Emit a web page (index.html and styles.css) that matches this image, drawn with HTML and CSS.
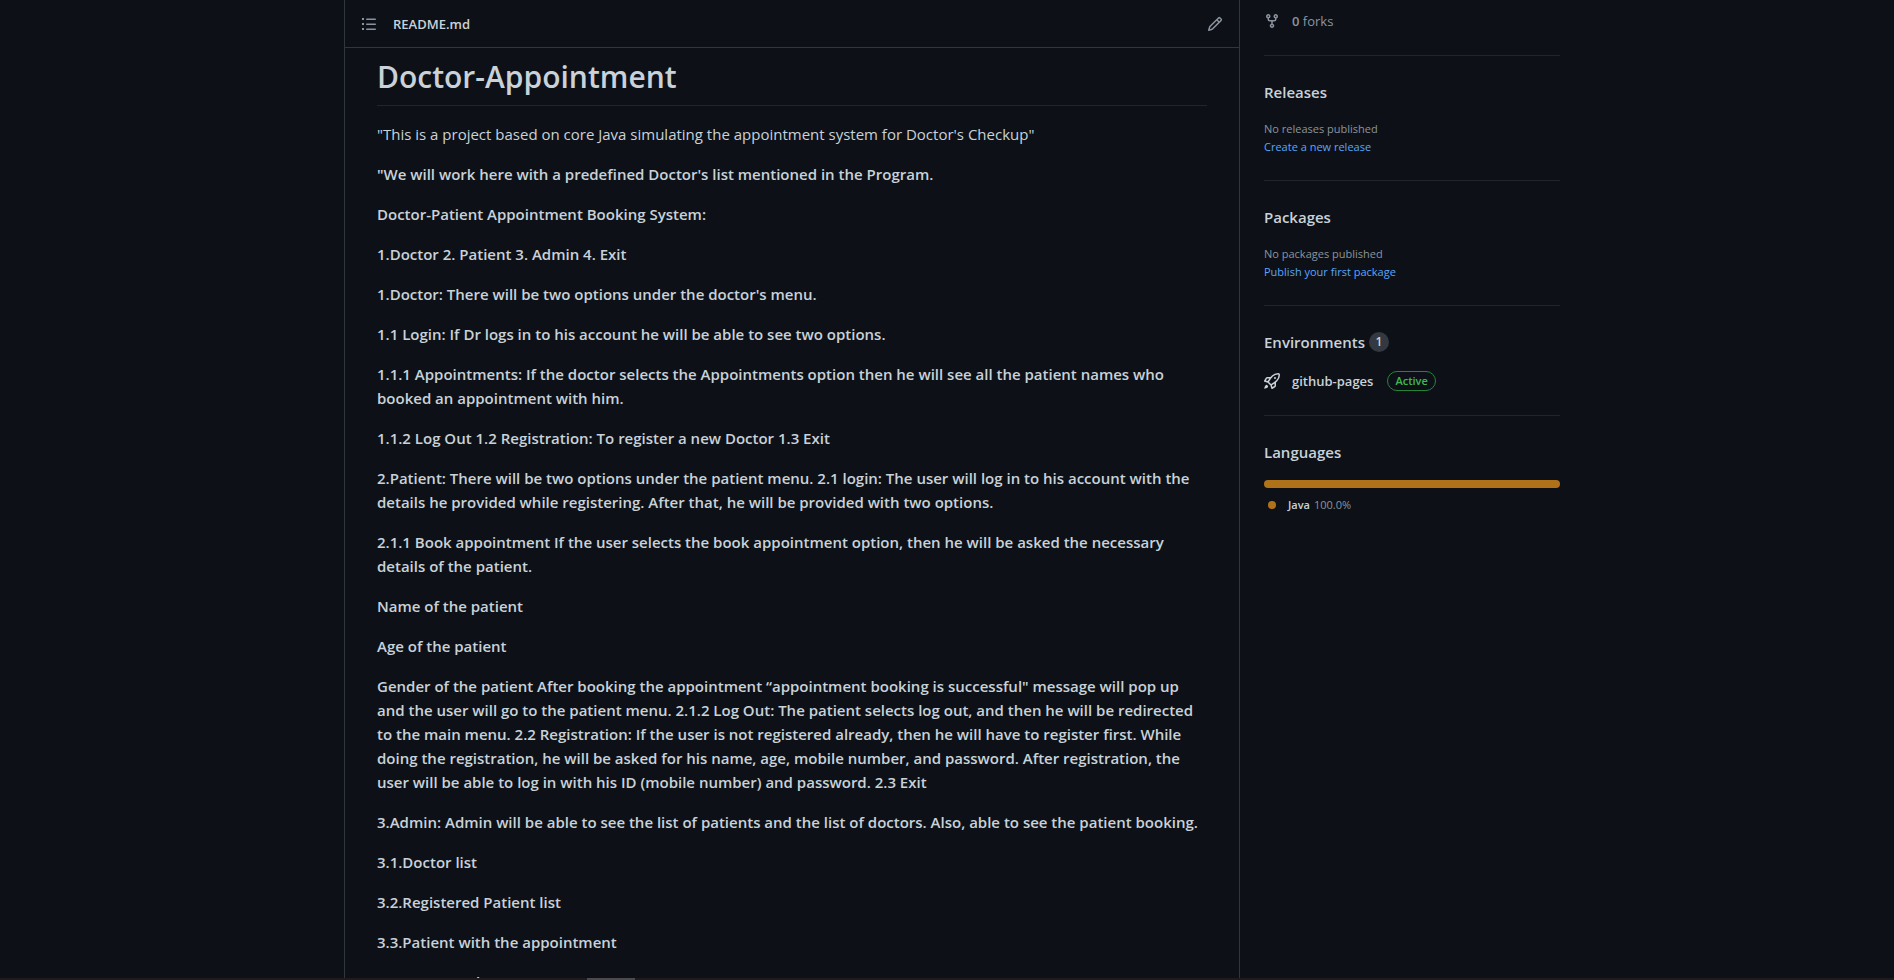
FILE: index.html
```html
<!DOCTYPE html>
<html lang="en">
<head>
<meta charset="utf-8">
<title>Doctor-Appointment</title>
<link rel="stylesheet" href="styles.css">
</head>
<body>
<div class="layout">
  <main class="readme">
    <header class="readme-bar">
      <button class="icon-button" type="button" aria-label="Outline">
        <svg class="icon" viewBox="0 0 16 16"><path d="M1 2h2v2H1zM1 7h2v2H1zM1 12h2v2H1zM5.75 2.5a.75.75 0 000 1.5h8.5a.75.75 0 000-1.5h-8.5zm0 5a.75.75 0 000 1.5h8.5a.75.75 0 000-1.5h-8.5zm0 5a.75.75 0 000 1.5h8.5a.75.75 0 000-1.5h-8.5z"/></svg>
      </button>
      <a class="file-name" href="#readme">README.md</a>
      <button class="icon-button edit" type="button" aria-label="Edit">
        <svg class="icon" viewBox="0 0 16 16"><path fill-rule="evenodd" d="M11.013 1.427a1.75 1.75 0 012.474 0l1.086 1.086a1.75 1.75 0 010 2.474l-8.61 8.61c-.21.21-.47.364-.756.445l-3.251.93a.75.75 0 01-.927-.928l.929-3.25a1.75 1.75 0 01.445-.758l8.61-8.61zm1.414 1.06a.25.25 0 00-.354 0L10.811 3.75l1.439 1.44 1.263-1.263a.25.25 0 000-.354l-1.086-1.086zM11.189 6.25L9.75 4.81l-6.286 6.287a.25.25 0 00-.064.108l-.558 1.953 1.953-.558a.249.249 0 00.108-.064l6.286-6.286z"/></svg>
      </button>
    </header>
    <article class="markdown" id="readme">
      <h1>Doctor-Appointment</h1>
      <p class="intro">"This is a project based on core Java simulating the appointment system for Doctor's Checkup"</p>
      <p>"We will work here with a predefined Doctor's list mentioned in the Program.</p>
      <p>Doctor-Patient Appointment Booking System:</p>
      <p>1.Doctor 2. Patient 3. Admin 4. Exit</p>
      <p>1.Doctor: There will be two options under the doctor's menu.</p>
      <p>1.1 Login: If Dr logs in to his account he will be able to see two options.</p>
      <p>1.1.1 Appointments: If the doctor selects the Appointments option then he will see all the patient names who<br>booked an appointment with him.</p>
      <p>1.1.2 Log Out 1.2 Registration: To register a new Doctor 1.3 Exit</p>
      <p>2.Patient: There will be two options under the patient menu. 2.1 login: The user will log in to his account with the<br>details he provided while registering. After that, he will be provided with two options.</p>
      <p>2.1.1 Book appointment If the user selects the book appointment option, then he will be asked the necessary<br>details of the patient.</p>
      <p>Name of the patient</p>
      <p>Age of the patient</p>
      <p>Gender of the patient After booking the appointment “appointment booking is successful" message will pop up<br>and the user will go to the patient menu. 2.1.2 Log Out: The patient selects log out, and then he will be redirected<br>to the main menu. 2.2 Registration: If the user is not registered already, then he will have to register first. While<br>doing the registration, he will be asked for his name, age, mobile number, and password. After registration, the<br>user will be able to log in with his ID (mobile number) and password. 2.3 Exit</p>
      <p>3.Admin: Admin will be able to see the list of patients and the list of doctors. Also, able to see the patient booking.</p>
      <p>3.1.Doctor list</p>
      <p>3.2.Registered Patient list</p>
      <p>3.3.Patient with the appointment</p>
      <p>3.4.Menu Book</p>
    </article>
  </main>
  <aside class="sidebar">
    <section class="forks">
      <a class="fork-link" href="#forks">
        <svg class="icon" viewBox="0 0 16 16"><path fill-rule="evenodd" d="M5 3.25a.75.75 0 11-1.5 0 .75.75 0 011.5 0zm0 2.122a2.25 2.25 0 10-1.5 0v.878A2.25 2.25 0 005.75 8.5h1.5v2.128a2.251 2.251 0 101.5 0V8.5h1.5a2.25 2.25 0 002.25-2.25v-.878a2.25 2.25 0 10-1.5 0v.878a.75.75 0 01-.75.75h-4.5A.75.75 0 015 6.25v-.878zm3.75 7.378a.75.75 0 11-1.5 0 .75.75 0 011.5 0zm3-8.75a.75.75 0 100-1.5.75.75 0 000 1.5z"/></svg>
        <span><strong>0</strong> forks</span>
      </a>
    </section>
    <section>
      <h2>Releases</h2>
      <p class="note">No releases published</p>
      <a class="action" href="#release">Create a new release</a>
    </section>
    <section>
      <h2>Packages</h2>
      <p class="note">No packages published</p>
      <a class="action" href="#package">Publish your first package</a>
    </section>
    <section class="environments">
      <h2>Environments <span class="counter">1</span></h2>
      <a class="environment" href="#pages">
        <svg class="icon" viewBox="0 0 16 16"><path fill-rule="evenodd" d="M14.064 0a8.75 8.75 0 00-6.187 2.563l-.459.458c-.314.314-.616.641-.904.979H3.31a1.75 1.75 0 00-1.49.833L.11 7.607a.75.75 0 00.418 1.11l3.102.954c.037.051.079.1.124.145l2.429 2.428c.046.046.094.088.145.125l.954 3.102a.75.75 0 001.11.418l2.774-1.707a1.75 1.75 0 00.833-1.49V9.485c.338-.288.665-.59.979-.904l.458-.459A8.75 8.75 0 0016 1.936V1.75A1.75 1.75 0 0014.25 0h-.186zM10.5 10.625c-.088.06-.177.118-.266.175l-2.35 1.521.548 1.783 1.949-1.2a.25.25 0 00.119-.213v-2.066zM3.678 8.116L5.2 5.766c.058-.09.117-.178.176-.266H3.309a.25.25 0 00-.213.119l-1.2 1.95 1.782.547zm5.26-4.493A7.25 7.25 0 0114.063 1.5h.186a.25.25 0 01.25.25v.186a7.25 7.25 0 01-2.123 5.127l-.459.458a15.21 15.21 0 01-2.499 2.02l-2.317 1.5-2.143-2.143 1.5-2.317a15.25 15.25 0 012.02-2.5l.458-.458zM12 5a1 1 0 11-2 0 1 1 0 012 0zm-8.44 9.56a1.5 1.5 0 10-2.12-2.12c-.734.73-1.047 2.332-1.15 3.003a.23.23 0 00.265.265c.671-.103 2.273-.416 3.005-1.148z"/></svg>
        <span>github-pages</span>
        <span class="status">Active</span>
      </a>
    </section>
    <section class="languages">
      <h2>Languages</h2>
      <div class="language-bar"></div>
      <div class="language"><span class="dot"></span><strong>Java</strong><span class="share">100.0%</span></div>
    </section>
  </aside>
</div>
<div class="scroll-strip"><div class="scroll-thumb"></div></div>
</body>
</html>
```
FILE: styles.css
```css
* { box-sizing: border-box; }

body {
  margin: 0;
  height: 100vh;
  display: flex;
  flex-direction: column;
  overflow: hidden;
  background: #0d1117;
  color: #c9d1d9;
  font: 15px/24px "Open Sans", "Noto Sans", sans-serif;
}

a { color: inherit; text-decoration: none; }
h1, h2, p { margin: 0; }
strong { font-weight: 600; }
.icon { display: block; width: 16px; height: 16px; flex: none; fill: currentColor; }

.layout {
  flex: 1;
  min-height: 0;
  overflow: hidden;
  width: 100%;
  max-width: 1290px;
  margin: 0 auto;
  padding: 0 32px 0 42px;
  display: grid;
  grid-template-columns: minmax(0, 1fr) 296px;
  gap: 24px;
}

.readme { border: solid #30363d; border-width: 0 1px; }

.readme-bar {
  display: flex;
  align-items: center;
  gap: 16px;
  height: 48px;
  padding: 0 16px;
  border-bottom: 1px solid #30363d;
}
.icon-button { padding: 0; border: 0; background: none; color: #8b949e; }
.edit { margin-left: auto; }
.file-name { font-size: 13px; font-weight: 600; }

.markdown {
  display: flex;
  flex-direction: column;
  gap: 16px;
  padding: 9px 32px;
  font-weight: 600;
  white-space: nowrap;
}
.markdown h1 {
  padding-bottom: 8px;
  border-bottom: 1px solid #21262d;
  font-size: 30px;
  line-height: 40px;
  font-weight: 600;
}
.markdown .intro { font-weight: 400; }

.sidebar section { padding: 24px 0; border-bottom: 1px solid #21262d; }
.sidebar .forks { padding-top: 10px; }
.sidebar .languages { border-bottom: 0; }
.sidebar h2 {
  display: flex;
  align-items: center;
  gap: 4px;
  margin-bottom: 16px;
  font-size: 15px;
  line-height: 24px;
  font-weight: 600;
}
.fork-link, .environment {
  display: flex;
  align-items: center;
  gap: 12px;
  height: 21px;
  font-size: 13px;
}
.fork-link { color: #8b949e; }
.note, .action { display: block; font-size: 11px; line-height: 18px; }
.note { color: #8b949e; }
.action { color: #58a6ff; }

.counter {
  min-width: 20px;
  padding: 0 6px;
  border-radius: 20px;
  background: #343941;
  font-size: 12px;
  line-height: 20px;
  text-align: center;
}
.environment { font-weight: 600; }
.status {
  margin-left: 2px;
  padding: 0 7px;
  border: 1px solid #238636;
  border-radius: 20px;
  color: #3fb950;
  font-size: 11px;
  line-height: 18px;
}

.language-bar { height: 8px; border-radius: 6px; background: #b07219; }
.language {
  display: flex;
  align-items: center;
  gap: 4px;
  margin-top: 8px;
  padding-left: 4px;
  font-size: 11px;
  line-height: 18px;
}
.dot { width: 8px; height: 8px; margin-right: 8px; border-radius: 50%; background: #b07219; }
.share { color: #8b949e; }

.scroll-strip { flex: none; height: 2px; background: #1f1b1c; }
.scroll-thumb { width: 48px; height: 2px; margin-left: 31%; background: #4c4a4d; }
```
